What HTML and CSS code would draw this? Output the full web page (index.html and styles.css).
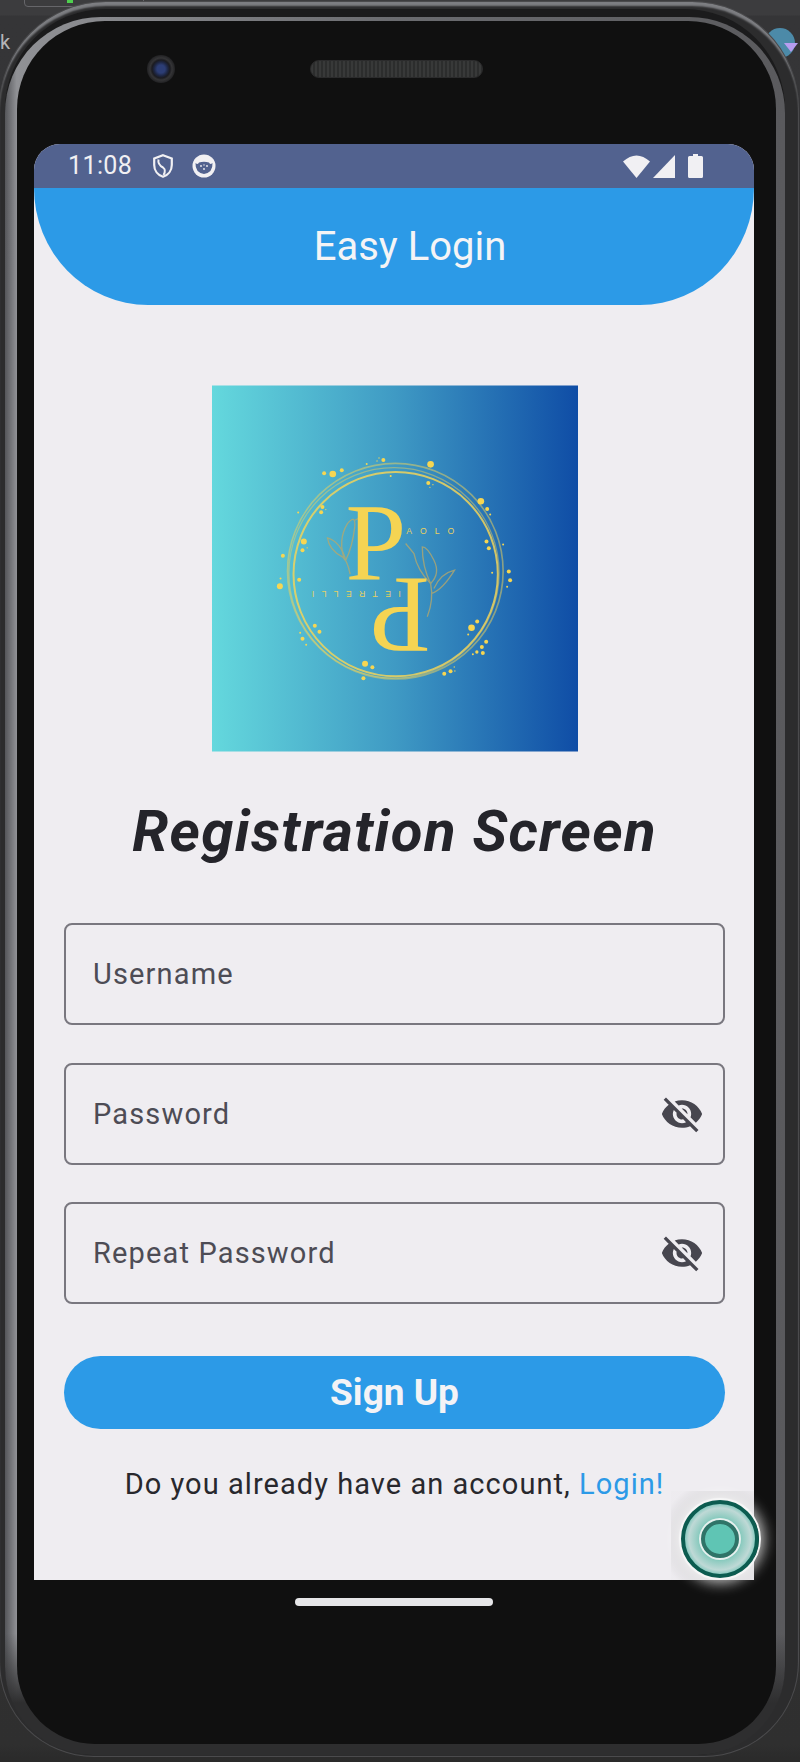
FILE: index.html
```html
<!DOCTYPE html>
<html lang="en">
<head>
<meta charset="utf-8">
<title>Easy Login</title>
<link rel="stylesheet" href="styles.css">
</head>
<body>
<div class="desk-tab"></div>
<div class="desk-led"></div>
<span class="desk-text">k</span>
<div class="desk-badge"></div>
<div class="desk-arrow"></div>
<div class="device">
  <div class="rim">
    <div class="band">
      <div class="bezel">
        <div class="top-bezel">
          <div class="camera"></div>
          <div class="speaker"></div>
        </div>
        <main class="screen">
          <div class="status-bar">
            <div class="status-left">
              <span class="clock">11:08</span>
              <svg class="shield" viewBox="0 0 20 24"><path d="M10 1.200 18.800 4.500V11c0 5.500-3.600 10-8.800 11.800C4.800 21 1.200 16.500 1.200 11V4.500Z" fill="none" stroke="#f1f0f3" stroke-width="2.200"/><path d="M5.500 5.500 Q4.500 10.500 10 13.500 Q13.500 16 10.500 21" fill="none" stroke="#f1f0f3" stroke-width="2"/></svg>
              <svg class="face" viewBox="0 0 24 24"><circle cx="12" cy="12" r="11.500" fill="#f1f0f3"/><path d="M3.500 9 Q6 11 7 8.500 Q12 7 17 8.500 Q18 11 20.500 9 Q21 18.500 12 20 Q3 18.500 3.500 9Z" fill="#52628f"/><circle cx="9" cy="12" r=".9" fill="#f1f0f3"/><circle cx="12" cy="15" r=".9" fill="#f1f0f3"/><circle cx="15" cy="12" r=".9" fill="#f1f0f3"/><circle cx="12" cy="11" r=".7" fill="#f1f0f3"/></svg>
            </div>
            <div class="status-right">
              <svg class="wifi" viewBox="0 0 27 23"><path d="M0 6.500 Q13.500 -5.500 27 6.500 L13.500 23Z" fill="#f1f0f3"/></svg>
              <svg class="signal" viewBox="0 0 22 23"><path d="M22 0V23H0Z" fill="#f1f0f3"/></svg>
              <svg class="battery" viewBox="0 0 15 24"><path d="M5 0H10V2H13.500Q15 2 15 3.500V22.500Q15 24 13.500 24H1.500Q0 24 0 22.500V3.500Q0 2 1.500 2H5Z" fill="#f1f0f3"/></svg>
            </div>
          </div>
          <header class="app-bar">Easy Login</header>
          <section class="content">
            <svg class="logo" viewBox="33 45 1100 1100" role="img" aria-label="Paolo Pietrelli logo">
              <defs>
                <linearGradient id="logoBg" x1="0" y1="0" x2="1" y2="0">
                  <stop offset="0" stop-color="#64d8dd"/>
                  <stop offset=".5" stop-color="#3f9ac4"/>
                  <stop offset="1" stop-color="#0f4da6"/>
                </linearGradient>
              </defs>
              <rect x="33" y="45" width="1100" height="1100" fill="url(#logoBg)"/>
              <g fill="none" stroke="#f0d35a">
                <circle cx="585" cy="612" r="307" stroke-width="6" opacity=".85"/>
                <circle cx="584" cy="603" r="324" stroke-width="5" opacity=".5"/>
                <circle cx="580" cy="608" r="316" stroke-width="4" opacity=".45"/>
              </g>
              <g fill="none" stroke="#b9a96a" stroke-width="4" opacity=".75">
                <path d="M448 612 Q440 570 425 560 Q385 540 380 503 Q420 515 435 570"/>
                <path d="M432 570 Q410 510 440 460 Q465 430 462 470 Q455 530 435 570"/>
                <path d="M462 450 Q480 440 497 435"/>
                <path d="M680 740 Q700 690 690 640 Q650 600 640 550 Q615 520 615 520"/>
                <path d="M693 670 Q725 660 762 600 Q720 610 700 655"/>
                <path d="M690 640 Q720 610 700 570 Q680 530 665 530 Q665 590 690 640"/>
              </g>
              <text class="logo-big" x="434" y="628">P</text>
              <text class="logo-big" x="525" y="850" transform="rotate(180 607 739)">P</text>
              <text class="logo-small" x="617" y="490">AOLO</text>
              <text class="logo-small logo-small-wide" x="330" y="680" transform="rotate(180 465 671)">IETRELLI</text>
              <g fill="#f6d652">
                <circle cx="396" cy="311" r="10"/><circle cx="370" cy="309" r="6"/><circle cx="423" cy="300" r="6"/>
                <circle cx="498" cy="281" r="3"/><circle cx="548" cy="269" r="6"/><circle cx="535" cy="263" r="2"/><circle cx="529" cy="272" r="2"/>
                <circle cx="690" cy="282" r="10"/><circle cx="683" cy="338" r="6"/><circle cx="697" cy="343" r="2"/><circle cx="688" cy="351" r="2"/><circle cx="570" cy="317" r="3"/>
                <circle cx="841" cy="393" r="10"/><circle cx="860" cy="416" r="6"/><circle cx="869" cy="433" r="3"/>
                <circle cx="858" cy="514" r="6"/><circle cx="865" cy="534" r="6"/><circle cx="908" cy="523" r="3"/><circle cx="875" cy="608" r="3"/>
                <circle cx="925" cy="604" r="6"/><circle cx="929" cy="630" r="6"/><circle cx="920" cy="650" r="3"/>
                <circle cx="365" cy="410" r="6"/><circle cx="361" cy="426" r="6"/><circle cx="375" cy="418" r="2"/><circle cx="292" cy="427" r="3"/>
                <circle cx="309" cy="514" r="9"/><circle cx="305" cy="540" r="6"/><circle cx="319" cy="533" r="2"/><circle cx="246" cy="557" r="6"/>
                <circle cx="239" cy="625" r="3"/><circle cx="237" cy="648" r="9"/><circle cx="295" cy="629" r="6"/>
                <circle cx="342" cy="767" r="6"/><circle cx="356" cy="785" r="6"/><circle cx="298" cy="788" r="3"/><circle cx="305" cy="806" r="6"/><circle cx="316" cy="824" r="3"/>
                <circle cx="493" cy="881" r="9"/><circle cx="515" cy="892" r="6"/><circle cx="488" cy="925" r="6"/>
                <circle cx="731" cy="911" r="6"/><circle cx="750" cy="904" r="6"/><circle cx="761" cy="891" r="2"/><circle cx="763" cy="903" r="2"/>
                <circle cx="813" cy="773" r="10"/><circle cx="830" cy="754" r="6"/><circle cx="803" cy="793" r="3"/>
                <circle cx="857" cy="815" r="6"/><circle cx="844" cy="831" r="6"/><circle cx="847" cy="849" r="6"/><circle cx="829" cy="846" r="5"/><circle cx="817" cy="853" r="3"/>
              </g>
            </svg>
            <h1 class="title">Registration Screen</h1>
            <form class="form">
              <div class="field"><span class="field-label">Username</span></div>
              <div class="field"><span class="field-label">Password</span>
                <svg class="eye" viewBox="0 0 24 24"><path d="M12 7c2.760 0 5 2.240 5 5 0 .65-.13 1.260-.36 1.830l2.920 2.920c1.510-1.260 2.700-2.890 3.430-4.750-1.730-4.390-6-7.500-11-7.500-1.400 0-2.740.25-3.980.7l2.160 2.160C10.740 7.130 11.350 7 12 7zM2 4.270l2.280 2.280.46.46C3.080 8.300 1.780 10.020 1 12c1.730 4.390 6 7.500 11 7.500 1.550 0 3.030-.3 4.380-.84l.42.42L19.730 22 21 20.730 3.270 3 2 4.270zM7.530 9.800l1.550 1.550c-.05.21-.08.43-.08.65 0 1.660 1.340 3 3 3 .22 0 .44-.03.65-.08l1.550 1.550c-.67.33-1.410.53-2.200.53-2.760 0-5-2.240-5-5 0-.79.2-1.530.53-2.200zm4.310-.78l3.150 3.150.02-.16c0-1.660-1.340-3-3-3l-.17.01z"/></svg>
              </div>
              <div class="field"><span class="field-label">Repeat Password</span>
                <svg class="eye" viewBox="0 0 24 24"><path d="M12 7c2.760 0 5 2.240 5 5 0 .65-.13 1.260-.36 1.830l2.920 2.920c1.510-1.260 2.700-2.890 3.430-4.750-1.730-4.390-6-7.500-11-7.500-1.400 0-2.740.25-3.980.7l2.160 2.160C10.740 7.130 11.350 7 12 7zM2 4.270l2.280 2.280.46.46C3.080 8.300 1.780 10.020 1 12c1.730 4.390 6 7.500 11 7.500 1.550 0 3.030-.3 4.380-.84l.42.42L19.730 22 21 20.730 3.270 3 2 4.270zM7.530 9.800l1.550 1.550c-.05.21-.08.43-.08.65 0 1.660 1.340 3 3 3 .22 0 .44-.03.65-.08l1.550 1.550c-.67.33-1.410.53-2.200.53-2.760 0-5-2.240-5-5 0-.79.2-1.530.53-2.200zm4.310-.78l3.150 3.150.02-.16c0-1.660-1.340-3-3-3l-.17.01z"/></svg>
              </div>
              <button class="submit" type="button">Sign Up</button>
            </form>
            <p class="hint">Do you already have an account, <a class="hint-link" href="#">Login!</a></p>
          </section>
        </main>
        <div class="home-row"><div class="home-indicator"></div></div>
      </div>
    </div>
  </div>
  <div class="touch-glow"></div>
  <div class="touch"><div class="touch-core"></div></div>
</div>
</body>
</html>
```

FILE: styles.css
```css
* { box-sizing: border-box; }
html, body { margin: 0; padding: 0; }
body {
  position: relative;
  width: 800px;
  height: 1762px;
  overflow: hidden;
  background: linear-gradient(180deg, #3c3c3e 0, #3c3c3e 15px, #353537 16px, #333335 60%, #2f2f2f 99%, #2a2a2a 100%);
  font-family: Roboto, "Liberation Sans", sans-serif;
}
.desk-tab {
  position: absolute;
  left: 24px;
  top: -12px;
  width: 120px;
  height: 19px;
  border: 1px solid #66666a;
  border-radius: 4px;
}
.desk-led {
  position: absolute;
  left: 67px;
  top: 0;
  width: 6px;
  height: 3px;
  background: #4fd04f;
}
.desk-text {
  position: absolute;
  left: 0;
  top: 30px;
  color: #b5b5b8;
  font-size: 20px;
  line-height: 24px;
}
.desk-badge {
  position: absolute;
  left: 765px;
  top: 28px;
  width: 30px;
  height: 30px;
  border-radius: 50%;
  background: #4c8aa8;
}
.desk-arrow {
  position: absolute;
  left: 784px;
  top: 43px;
  width: 0;
  height: 0;
  border-left: 7px solid transparent;
  border-right: 7px solid transparent;
  border-top: 9px solid #b79df0;
}
.device {
  position: relative;
  width: 798px;
  height: 1754px;
  margin: 2px 2px 0 0;
  padding: 7px 13px 1px 5px;
  border-radius: 106px 106px 94px 94px;
  background: #2c2c2d;
  box-shadow: 0 0 0 1px #4b4b4d, inset 0 5px 2px -1px #7d7e82;
}
.rim {
  height: 100%;
  padding-top: 8px;
  border-radius: 100px 100px 90px 90px;
  background: #1b1b1c;
}
.band {
  height: 100%;
  padding: 4px 9px 11px 12px;
  border-radius: 96px 96px 88px 88px;
  background:
    linear-gradient(180deg, rgba(46,46,47,0) 93%, #2e2e2f 97%),
    linear-gradient(90deg, #55565a 0, #909195 1.5%, #6b6c70 50%, #5a5a5d 100%);
}
.bezel {
  display: flex;
  flex-direction: column;
  height: 100%;
  padding: 0 22px 0 17px;
  border-radius: 88px 88px 78px 78px;
  background: #101010;
}
.top-bezel {
  display: flex;
  align-items: center;
  flex: none;
  height: 123px;
  padding: 0 0 27px 113px;
  gap: 135px;
}
.camera {
  flex: none;
  width: 28px;
  height: 28px;
  border-radius: 50%;
  background: radial-gradient(circle, #2c3d75 0 4px, #1d2540 7px, #1b1b20 9px, #343436 11px, #222224 14px);
}
.speaker {
  flex: none;
  width: 173px;
  height: 18px;
  border-radius: 9px;
  border: 1px solid #2b2b2c;
  background: repeating-linear-gradient(90deg, #383939 0 2px, #2c2d2d 2px 4px);
}
.screen {
  display: flex;
  flex-direction: column;
  flex: none;
  width: 720px;
  height: 1436px;
  background: #efedf1;
  border-radius: 26px 26px 0 0;
  overflow: hidden;
}
.status-bar {
  display: flex;
  align-items: center;
  justify-content: space-between;
  flex: none;
  height: 44px;
  padding: 0 51px 0 34px;
  background: #52628f;
  color: #f1f0f3;
}
.status-left, .status-right { display: flex; align-items: center; }
.clock { font-size: 25px; line-height: 44px; width: 85px; letter-spacing: .4px; }
.shield { width: 20px; height: 24px; margin-right: 19px; }
.face { width: 24px; height: 24px; }
.wifi { width: 27px; height: 23px; margin-right: 3px; }
.signal { width: 22px; height: 23px; margin-right: 13px; }
.battery { width: 15px; height: 24px; }
.app-bar {
  flex: none;
  height: 117px;
  padding-left: 32px;
  border-radius: 0 0 114px 114px / 0 0 117px 117px;
  background: #2c9ae7;
  color: #f4f4f6;
  font-size: 40px;
  line-height: 118px;
  text-align: center;
}
.content {
  display: flex;
  flex-direction: column;
  align-items: center;
  flex: 1;
  padding: 80px 29px 0 30px;
}
.logo { display: block; flex: none; width: 366px; height: 367px; }
.title {
  margin: 44px 0 0;
  color: #24242a;
  font-size: 58px;
  font-weight: 700;
  font-style: italic;
  line-height: 70px;
  letter-spacing: 1.350px;
  white-space: nowrap;
}
.form {
  display: flex;
  flex-direction: column;
  gap: 37.500px;
  width: 661px;
  margin-top: 57px;
}
.field {
  display: flex;
  align-items: center;
  justify-content: space-between;
  height: 102px;
  padding: 0 19px 0 27px;
  border: 2px solid #79777f;
  border-radius: 8px;
  color: #4d4c55;
  font-size: 29px;
  letter-spacing: 1.150px;
}
.eye { flex: none; width: 44px; height: 44px; fill: #47464f; }
.submit {
  height: 73px;
  margin-top: 14.500px;
  border: 0;
  border-radius: 37px;
  background: #2c9ae7;
  color: #f3f3f6;
  font-family: inherit;
  font-size: 37px;
  font-weight: 700;
}
.hint {
  margin: 34.500px 0 0;
  color: #28282d;
  font-size: 29px;
  line-height: 40px;
  letter-spacing: 1.050px;
  white-space: nowrap;
}
.hint-link { color: #2c9ae7; text-decoration: none; }
.home-row { display: flex; justify-content: center; flex: none; width: 720px; padding-top: 18px; }
.home-indicator { width: 198px; height: 8px; border-radius: 4px; background: #e6e6e8; }
.logo-big { font-family: "Liberation Serif", serif; font-size: 328px; fill: #f5d453; }
.logo-small { font-family: "Liberation Sans", sans-serif; font-size: 26px; letter-spacing: 24px; fill: #e6d063; }
.logo-small-wide { letter-spacing: 22px; }
.touch-glow {
  position: absolute;
  left: 671px;
  top: 1489px;
  width: 83px;
  height: 89px;
  background: radial-gradient(circle at 49px 48px, transparent 38px, rgba(120,120,120,.2) 42px, rgba(200,200,200,.04) 60px);
}
.touch {
  position: absolute;
  left: 681px;
  top: 1498px;
  display: flex;
  align-items: center;
  justify-content: center;
  width: 78px;
  height: 78px;
  border: 4px solid #0c5c50;
  border-radius: 50%;
  background: radial-gradient(circle, #5fc5b4 0 18px, #8ecbc0 22px, #bfd9d6 31px, #72c3b6 37px);
  box-shadow: 0 0 0 2px #f6f6f6, 0 0 14px 5px rgba(255,255,255,.75);
}
.touch-core {
  width: 38px;
  height: 38px;
  border: 4px solid #2f7468;
  border-radius: 50%;
  background: #5fc5b4;
  box-shadow: 0 0 0 2px #e6f0ee;
}
```
